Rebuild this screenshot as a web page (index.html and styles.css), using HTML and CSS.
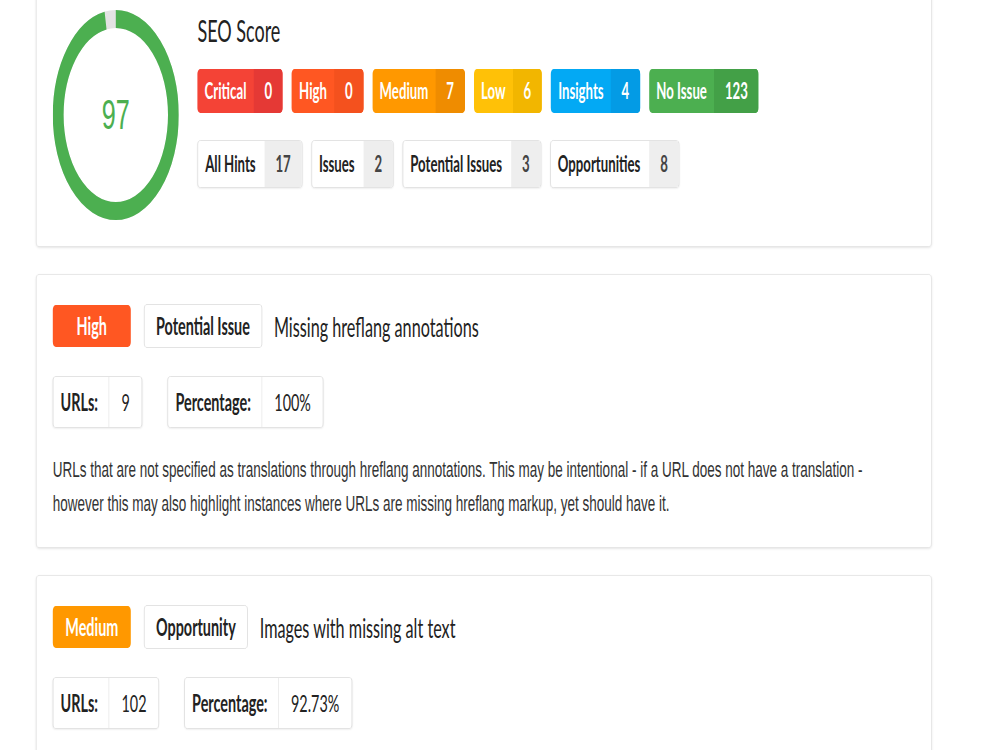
FILE: index.html
```html
<!DOCTYPE html>
<html lang="en">
<head>
  <meta charset="UTF-8">
  <title>SEO Hints</title>
  <link rel="stylesheet" href="styles.css">
</head>
<body>

  <div class="page">

    <div class="card score-card">
      <div class="score-ring">
        <svg viewBox="0 0 210 210" width="210" height="210">
          <circle cx="105" cy="105" r="96" fill="none" stroke="#e3e3e3" stroke-width="18"/>
          <circle cx="105" cy="105" r="96" fill="none" stroke="#4caf50" stroke-width="18"
                  stroke-dasharray="585.1 603.2" transform="rotate(-90 105 105)"/>
        </svg>
        <span class="score-value">97</span>
      </div>

      <div class="score-info">
        <h2>SEO Score</h2>

        <div class="badge-row">
          <span class="badge critical"><span class="badge-label">Critical</span><span class="badge-count">0</span></span>
          <span class="badge high"><span class="badge-label">High</span><span class="badge-count">0</span></span>
          <span class="badge medium"><span class="badge-label">Medium</span><span class="badge-count">7</span></span>
          <span class="badge low"><span class="badge-label">Low</span><span class="badge-count">6</span></span>
          <span class="badge insights"><span class="badge-label">Insights</span><span class="badge-count">4</span></span>
          <span class="badge no-issue"><span class="badge-label">No Issue</span><span class="badge-count">123</span></span>
        </div>

        <div class="hint-row">
          <span class="hint"><span class="hint-label">All Hints</span><span class="hint-count">17</span></span>
          <span class="hint"><span class="hint-label">Issues</span><span class="hint-count">2</span></span>
          <span class="hint"><span class="hint-label">Potential Issues</span><span class="hint-count">3</span></span>
          <span class="hint"><span class="hint-label">Opportunities</span><span class="hint-count">8</span></span>
        </div>
      </div>
    </div>

    <div class="card hint-card">
      <div class="hint-head">
        <span class="level high">High</span>
        <span class="type">Potential Issue</span>
        <h3>Missing hreflang annotations</h3>
      </div>
      <div class="stats">
        <span class="stat"><span class="stat-label">URLs:</span><span class="stat-value">9</span></span>
        <span class="stat"><span class="stat-label">Percentage:</span><span class="stat-value">100%</span></span>
      </div>
      <p class="desc">URLs that are not specified as translations through hreflang annotations. This may be intentional - if a URL does not have a translation - however this may also highlight instances where URLs are missing hreflang markup, yet should have it.</p>
    </div>

    <div class="card hint-card">
      <div class="hint-head">
        <span class="level medium">Medium</span>
        <span class="type">Opportunity</span>
        <h3>Images with missing alt text</h3>
      </div>
      <div class="stats">
        <span class="stat"><span class="stat-label">URLs:</span><span class="stat-value">102</span></span>
        <span class="stat"><span class="stat-label">Percentage:</span><span class="stat-value">92.73%</span></span>
      </div>
      <p class="desc">URLs that contain images without alt text. Alt text helps search engines and screen readers understand what an image shows.</p>
    </div>

  </div>

</body>
</html>
```

FILE: styles.css
```css
html, body {
  overflow: hidden;
}

body {
  margin: 0;
  background: #fff;
  color: #333;
  font-family: Lato, "Liberation Sans", sans-serif;
}

/* the page is drawn wide and squeezed to fit, as in the screenshot */
.page {
  width: 1667px;
  padding-left: 60px;
  box-sizing: border-box;
  transform: scaleX(0.6);
  transform-origin: left top;
}

.card {
  width: 1493px;
  box-sizing: border-box;
  background: #fff;
  border: 1px solid #e2e2e2;
  border-radius: 5px;
  box-shadow: 0 1px 3px rgba(0,0,0,0.1);
  margin-bottom: 27px;
}

.score-card {
  display: flex;
  margin-top: -12px;
  padding: 21px 27px 26px;
}

.score-ring {
  display: grid;
  place-items: center;
  width: 210px;
  height: 210px;
}

.score-ring svg,
.score-value {
  grid-area: 1 / 1;
}

.score-value {
  font-family: "Liberation Sans", Arial, sans-serif;
  font-size: 42px;
  color: #4caf50;
}

.score-info {
  margin-left: 31px;
}

h2 {
  margin: 2px 0 0;
  font-size: 30px;
  line-height: 36px;
  font-weight: 400;
  color: #222;
}

.badge-row,
.hint-row {
  display: flex;
  gap: 15px;
}

.badge-row {
  margin-top: 21px;
}

.hint-row {
  margin-top: 27px;
}

.badge {
  display: flex;
  height: 44px;
  line-height: 44px;
  border-radius: 5px;
  overflow: hidden;
  color: #fff;
  font-size: 22px;
  font-weight: 700;
}

.badge-label {
  padding: 0 12px;
}

.badge-count {
  padding: 0 18px;
}

.critical { background: #f44336; }
.critical .badge-count { background: #e53935; }
.high { background: #ff5722; }
.high .badge-count { background: #f4511e; }
.medium { background: #ff9800; }
.medium .badge-count { background: #ef8c00; }
.low { background: #ffc107; }
.low .badge-count { background: #f2b600; }
.insights { background: #03a9f4; }
.insights .badge-count { background: #039be5; }
.no-issue { background: #4caf50; }
.no-issue .badge-count { background: #43a047; }

.hint {
  display: flex;
  height: 48px;
  line-height: 46px;
  box-sizing: border-box;
  border: 1px solid #dcdcdc;
  border-radius: 5px;
  overflow: hidden;
  font-size: 22px;
  font-weight: 700;
  color: #222;
  box-shadow: 0 1px 2px rgba(0,0,0,0.06);
}

.hint-label {
  padding: 0 15px 0 12px;
}

.hint-count {
  padding: 0 18px;
  background: #eee;
  color: #444;
}

.hint-card {
  padding: 29px 27px 26px;
}

.hint-head {
  display: flex;
  align-items: center;
}

.level {
  width: 130px;
  height: 42px;
  line-height: 42px;
  text-align: center;
  border-radius: 5px;
  color: #fff;
  font-size: 24px;
  font-weight: 700;
}

.level.high { background: #ff5722; }
.level.medium { background: #ff9800; }

.type {
  margin-left: 22px;
  height: 44px;
  line-height: 42px;
  box-sizing: border-box;
  padding: 0 19px;
  border: 1px solid #dcdcdc;
  border-radius: 5px;
  font-size: 24px;
  font-weight: 700;
  color: #222;
}

h3 {
  margin: 0 0 0 20px;
  font-size: 27px;
  font-weight: 400;
  color: #222;
}

.stats {
  display: flex;
  gap: 42px;
  margin-top: 28px;
}

.stat {
  display: flex;
  height: 52px;
  line-height: 50px;
  box-sizing: border-box;
  border: 1px solid #dcdcdc;
  border-radius: 5px;
  font-size: 24px;
  color: #222;
  box-shadow: 0 1px 2px rgba(0,0,0,0.06);
}

.stat-label {
  padding: 0 18px 0 12px;
  font-weight: 700;
  border-right: 1px solid #e2e2e2;
}

.stat-value {
  padding: 0 20px;
}

.desc {
  margin: 25px 0 0;
  font-family: "Liberation Sans", Arial, sans-serif;
  font-size: 22.5px;
  line-height: 34px;
  color: #333;
}
```
